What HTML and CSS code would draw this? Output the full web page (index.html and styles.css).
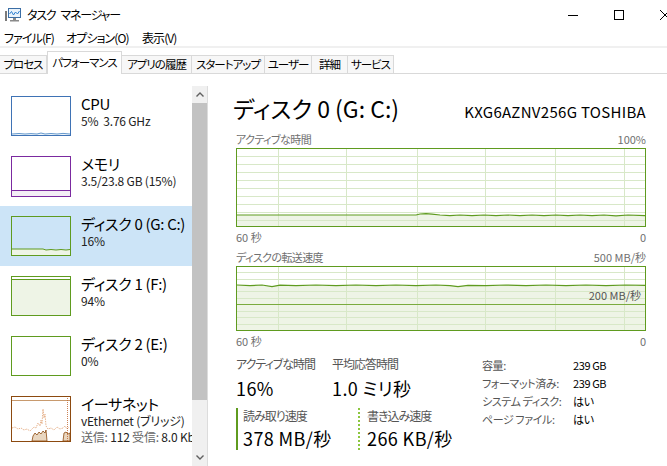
FILE: index.html
```html
<!DOCTYPE html>
<html lang="ja">
<head>
    <meta charset="UTF-8">
    <title>タスク マネージャー</title>
    <link rel="stylesheet" href="styles.css">
</head>
<body>
    <!-- barre de titre -->
    <div class="titlebar">
        <svg class="app-icon" viewBox="0 0 16 16" width="16" height="16">
            <rect x="0" y="4" width="2" height="10" fill="#7a7a7a"/>
            <rect x="3.5" y="1.5" width="12" height="9" fill="#eaf3fb" stroke="#3b6ea5"/>
            <polyline points="4.5,7 6.5,4.5 8.5,8 10.5,5 12.5,7 14.5,4" fill="none" stroke="#2d7fd0" stroke-width="1"/>
            <rect x="8" y="11" width="3" height="2" fill="#8a8a8a"/>
            <rect x="5" y="13" width="9" height="1.5" fill="#8a8a8a"/>
        </svg>
        <span class="title">タスク<span class="gap"></span>マネージャー</span>
        <div class="controls">
            <div class="ctl">
                <svg viewBox="0 0 10 10" width="10" height="10"><line x1="0" y1="5.5" x2="10" y2="5.5" stroke="#000"/></svg>
            </div>
            <div class="ctl">
                <svg viewBox="0 0 10 10" width="10" height="10"><rect x="0.5" y="0.5" width="9" height="9" fill="none" stroke="#000"/></svg>
            </div>
            <div class="ctl">
                <svg viewBox="0 0 10 10" width="10" height="10"><path d="M0 0 L10 10 M10 0 L0 10" stroke="#000" stroke-width="1"/></svg>
            </div>
        </div>
    </div>

    <div class="menubar">
        <span class="menu m1">ファイル(F)</span>
        <span class="menu m2">オプション(O)</span>
        <span class="menu">表示(V)</span>
    </div>

    <div class="tabs">
        <div class="tab t1">プロセス</div>
        <div class="tab t2 active">パフォーマンス</div>
        <div class="tab t3">アプリの履歴</div>
        <div class="tab t4">スタートアップ</div>
        <div class="tab t5">ユーザー</div>
        <div class="tab t6">詳細</div>
        <div class="tab t7">サービス</div>
    </div>

    <div class="main">
        <!-- liste des ressources -->
        <div class="sidebar">
            <div class="list">
                <div class="item">
                    <svg class="thumb" viewBox="0 0 60 40" width="60" height="40">
                        <path d="M1 38 L8 37.5 L14 38 L20 37.6 L26 38 L30 37 L34 38 L40 37.5 L46 38 L52 37.4 L59 38 L59 39 L1 39Z" fill="#eef5fb"/>
                        <polyline points="1,38 8,37.5 14,38 20,37.6 26,38 30,37 34,38 40,37.5 46,38 52,37.4 59,38" fill="none" stroke="#3f7fbf" stroke-width="0.8"/>
                        <rect x="0.5" y="0.5" width="59" height="39" fill="none" stroke="#3f73b5"/>
                    </svg>
                    <div class="info">
                        <div class="name">CPU</div>
                        <div class="sub">5%&nbsp; 3.76 GHz</div>
                    </div>
                </div>
                <div class="item">
                    <svg class="thumb" viewBox="0 0 60 41" width="60" height="41">
                        <rect x="1" y="34" width="58" height="6" fill="#f3eef5"/>
                        <line x1="1" y1="34.5" x2="59" y2="34.5" stroke="#7b2aa0"/>
                        <rect x="0.5" y="0.5" width="59" height="40" fill="none" stroke="#7b2aa0"/>
                    </svg>
                    <div class="info">
                        <div class="name">メモリ</div>
                        <div class="sub">3.5/23.8 GB (15%)</div>
                    </div>
                </div>
                <div class="item selected">
                    <svg class="thumb" viewBox="0 0 60 40" width="60" height="40">
                        <path d="M1 33 L32 33 L35 34 L40 33.5 L45 34 L50 33.5 L55 34 L59 33.5 L59 39 L1 39Z" fill="#eef4e6"/>
                        <polyline points="1,33 32,33 35,34 40,33.5 45,34 50,33.5 55,34 59,33.5" fill="none" stroke="#5f9b1f"/>
                        <rect x="0.5" y="0.5" width="59" height="39" fill="none" stroke="#5f9b1f"/>
                    </svg>
                    <div class="info">
                        <div class="name">ディスク 0 (G: C:)</div>
                        <div class="sub">16%</div>
                    </div>
                </div>
                <div class="item">
                    <svg class="thumb" viewBox="0 0 60 40" width="60" height="40">
                        <rect x="1" y="3" width="58" height="36" fill="#eef4e6"/>
                        <line x1="1" y1="3.5" x2="59" y2="3.5" stroke="#5f9b1f"/>
                        <rect x="0.5" y="0.5" width="59" height="39" fill="none" stroke="#5f9b1f"/>
                    </svg>
                    <div class="info">
                        <div class="name">ディスク 1 (F:)</div>
                        <div class="sub">94%</div>
                    </div>
                </div>
                <div class="item">
                    <svg class="thumb" viewBox="0 0 60 40" width="60" height="40">
                        <rect x="0.5" y="0.5" width="59" height="39" fill="none" stroke="#5f9b1f"/>
                    </svg>
                    <div class="info">
                        <div class="name">ディスク 2 (E:)</div>
                        <div class="sub">0%</div>
                    </div>
                </div>
                <div class="item tall">
                    <svg class="thumb" viewBox="0 0 60 46" width="60" height="46">
                        <line x1="1" y1="4.5" x2="59" y2="4.5" stroke="#c89a6e"/>
                        <path d="M21 45 L22 40 L24 37 L26 39 L28 36 L30 38 L32 35 L34 37 L35 34 L36 45Z M52 45 L53 37 L55 36 L57 38 L59 37 L59 45Z" fill="#e9d6bf" stroke="#8c4a10" stroke-width="0.8"/>
                        <polyline points="1,32 4,31 7,33 10,32 13,34 16,33 19,35 21,33 23,31 25,32 27,27 29,30 30,24 31,28 32,13 33,22 34,18 35,30 37,33 40,32 43,34 46,31 49,33 52,32 54,30 56,33 58,31" fill="none" stroke="#e0a070" stroke-width="0.8" stroke-dasharray="1.5 1"/>
                        <line x1="56.5" y1="2" x2="56.5" y2="45" stroke="#c0622a" stroke-width="0.8" stroke-dasharray="1 1"/>
                        <rect x="0.5" y="0.5" width="59" height="45" fill="none" stroke="#8c4a10"/>
                    </svg>
                    <div class="info">
                        <div class="name">イーサネット</div>
                        <div class="sub">vEthernet (ブリッジ)</div>
                        <div class="sub"><span class="dim">送信:</span> 112 <span class="dim">受信:</span> 8.0 Kbps</div>
                    </div>
                </div>
            </div>
            <div class="scrollbar">
                <div class="arrow">
                    <svg viewBox="0 0 8 5" width="8" height="5"><polyline points="0.5,4.5 4,1 7.5,4.5" fill="none" stroke="#606060" stroke-width="1.4"/></svg>
                </div>
                <div class="scroll-thumb"></div>
                <div class="scroll-gap"></div>
                <div class="arrow">
                    <svg viewBox="0 0 8 5" width="8" height="5"><polyline points="0.5,0.5 4,4 7.5,0.5" fill="none" stroke="#606060" stroke-width="1.4"/></svg>
                </div>
            </div>
        </div>

        <!-- détail du disque -->
        <div class="detail">
            <div class="header">
                <div class="big-title">ディスク 0 (G: C:)</div>
                <div class="model">KXG6AZNV256G TOSHIBA</div>
            </div>

            <div class="axis-row top">
                <span class="jp">アクティブな時間</span>
                <span>100%</span>
            </div>
            <svg class="graph" viewBox="0 0 410 79" width="410" height="79">
                <path d="M1 67 L180 67 L184 66 L190 65.6 L196 66.2 L204 67 L214 67.6 L224 67 L236 67.6 L248 67 L260 67.6 L272 67 L284 67.6 L296 67 L308 67.6 L320 67 L332 67.6 L344 67 L356 67.6 L368 67 L380 67.8 L392 67 L409 67.6 L409 78 L1 78Z" fill="#eef4e6"/>
                <g stroke="#d8e8c8" stroke-width="1">
                    <line x1="1" y1="8.5" x2="409" y2="8.5"/>
                    <line x1="1" y1="16.5" x2="409" y2="16.5"/>
                    <line x1="1" y1="24.5" x2="409" y2="24.5"/>
                    <line x1="1" y1="32.5" x2="409" y2="32.5"/>
                    <line x1="1" y1="40.5" x2="409" y2="40.5"/>
                    <line x1="1" y1="48.5" x2="409" y2="48.5"/>
                    <line x1="1" y1="56.5" x2="409" y2="56.5"/>
                    <line x1="1" y1="64.5" x2="409" y2="64.5"/>
                    <line x1="1" y1="72.5" x2="409" y2="72.5"/>
                    <line x1="42.5" y1="1" x2="42.5" y2="78"/>
                    <line x1="110.5" y1="1" x2="110.5" y2="78"/>
                    <line x1="181.5" y1="1" x2="181.5" y2="78"/>
                    <line x1="249.5" y1="1" x2="249.5" y2="78"/>
                    <line x1="319.5" y1="1" x2="319.5" y2="78"/>
                    <line x1="388.5" y1="1" x2="388.5" y2="78"/>
                </g>
                <polyline points="1,67 180,67 184,66 190,65.6 196,66.2 204,67 214,67.6 224,67 236,67.6 248,67 260,67.6 272,67 284,67.6 296,67 308,67.6 320,67 332,67.6 344,67 356,67.6 368,67 380,67.8 392,67 409,67.6" fill="none" stroke="#5f9b1f" stroke-width="1.2"/>
                <rect x="0.5" y="0.5" width="409" height="78" fill="none" stroke="#5f9b1f"/>
            </svg>
            <div class="axis-row">
                <span>60 秒</span>
                <span>0</span>
            </div>

            <div class="axis-row top second">
                <span class="jp">ディスクの転送速度</span>
                <span>500 MB/秒</span>
            </div>
            <div class="graph-wrap">
                <svg class="graph" viewBox="0 0 410 65" width="410" height="65">
                    <path d="M1 19 L14 19.6 L26 19 L36 20.6 L44 19.2 L60 19.6 L80 19 L100 19.6 L120 19 L140 19.6 L160 19 L180 19.6 L200 19 L214 19.6 L222 20.6 L232 19.4 L250 19.6 L270 19 L290 19.6 L310 19 L330 19.6 L350 19 L370 19.6 L390 19 L409 19.4 L409 64 L1 64Z" fill="#eef4e6"/>
                    <g stroke="#d8e8c8" stroke-width="1">
                        <line x1="1" y1="6.5" x2="409" y2="6.5"/>
                        <line x1="1" y1="13.5" x2="409" y2="13.5"/>
                        <line x1="1" y1="25.5" x2="409" y2="25.5"/>
                        <line x1="1" y1="32.5" x2="409" y2="32.5"/>
                        <line x1="1" y1="45.5" x2="409" y2="45.5"/>
                        <line x1="1" y1="51.5" x2="409" y2="51.5"/>
                        <line x1="1" y1="58.5" x2="409" y2="58.5"/>
                        <line x1="42.5" y1="1" x2="42.5" y2="64"/>
                        <line x1="110.5" y1="1" x2="110.5" y2="64"/>
                        <line x1="181.5" y1="1" x2="181.5" y2="64"/>
                        <line x1="249.5" y1="1" x2="249.5" y2="64"/>
                        <line x1="319.5" y1="1" x2="319.5" y2="64"/>
                        <line x1="388.5" y1="1" x2="388.5" y2="64"/>
                    </g>
                    <line x1="1" y1="38.5" x2="409" y2="38.5" stroke="#7aab3e" stroke-width="1"/>
                    <polyline points="1,19 14,19.6 26,19 36,20.6 44,19.2 60,19.6 80,19 100,19.6 120,19 140,19.6 160,19 180,19.6 200,19 214,19.6 222,20.6 232,19.4 250,19.6 270,19 290,19.6 310,19 330,19.6 350,19 370,19.6 390,19 409,19.4" fill="none" stroke="#5f9b1f" stroke-width="1.2"/>
                    <rect x="0.5" y="0.5" width="409" height="64" fill="none" stroke="#5f9b1f"/>
                </svg>
                <span class="scale-label">200 MB/秒</span>
            </div>
            <div class="axis-row">
                <span>60 秒</span>
                <span>0</span>
            </div>

            <div class="stats">
                <div class="stats-left">
                    <div class="stat-row">
                        <div class="stat col1">
                            <div class="stat-label">アクティブな時間</div>
                            <div class="stat-value">16%</div>
                        </div>
                        <div class="stat">
                            <div class="stat-label">平均応答時間</div>
                            <div class="stat-value">1.0 ミリ秒</div>
                        </div>
                    </div>
                    <div class="stat-row rates">
                        <div class="stat rate read">
                            <div class="stat-label">読み取り速度</div>
                            <div class="stat-value">378 MB/秒</div>
                        </div>
                        <div class="stat rate write">
                            <div class="stat-label">書き込み速度</div>
                            <div class="stat-value">266 KB/秒</div>
                        </div>
                    </div>
                </div>
                <div class="props">
                    <div class="prop"><span class="prop-key">容量:</span><span class="prop-val">239 GB</span></div>
                    <div class="prop"><span class="prop-key">フォーマット済み:</span><span class="prop-val">239 GB</span></div>
                    <div class="prop"><span class="prop-key">システム ディスク:</span><span class="prop-val">はい</span></div>
                    <div class="prop"><span class="prop-key">ページ ファイル:</span><span class="prop-val">はい</span></div>
                </div>
            </div>
        </div>
    </div>
</body>
</html>
```

FILE: styles.css
```css
* {
    box-sizing: border-box;
}

body {
    margin: 0;
    width: 667px;
    height: 466px;
    overflow: hidden;
    background-color: #fff;
    color: #000;
    font-family: "Noto Sans CJK JP", sans-serif;
    font-feature-settings: "palt";
    font-size: 12px;
}

/* barre de titre */
.titlebar {
    height: 30px;
    display: flex;
    align-items: center;
    padding-left: 5px;
}

.app-icon {
    margin-right: 6px;
}

.title {
    font-size: 12px;
    line-height: 16px;
    letter-spacing: -1.2px;
}

.title .gap {
    display: inline-block;
    width: 5px;
}

.controls {
    margin-left: auto;
    margin-right: -21px;
    display: flex;
    height: 100%;
}

.ctl {
    width: 46px;
    display: flex;
    align-items: center;
    justify-content: center;
}

/* menu */
.menubar {
    height: 18px;
    display: flex;
    align-items: center;
    padding-left: 4px;
    border-bottom: 2px solid #f0f0f0;
}

.menu {
    font-size: 12px;
    line-height: 16px;
    letter-spacing: -0.9px;
    white-space: nowrap;
}

.m1 {
    width: 62px;
}

.m2 {
    width: 76px;
}

/* onglets */
.tabs {
    height: 26px;
    display: flex;
    align-items: flex-end;
    border-bottom: 1px solid #d9d9d9;
}

.tab {
    height: 18px;
    font-size: 11.5px;
    line-height: 16px;
    letter-spacing: -1px;
    white-space: nowrap;
    text-align: center;
    background-color: #f7f7f7;
    border: 1px solid #d9d9d9;
    border-bottom: none;
    border-left: none;
}

.tab.active {
    height: 23px;
    margin-bottom: -1px;
    background-color: #fff;
    border-left: 1px solid #d9d9d9;
    padding-top: 2px;
}

.t1 { width: 47px; }
.t2 { width: 75px; }
.t3 { width: 70px; }
.t4 { width: 73px; }
.t5 { width: 47px; }
.t6 { width: 36px; }
.t7 { width: 46px; }

/* zone principale */
.main {
    display: flex;
    height: 392px;
}

.sidebar {
    width: 208px;
    padding-top: 12px;
    display: flex;
}

.list {
    width: 192px;
    overflow: hidden;
}

.item {
    height: 60px;
    display: flex;
    padding: 10px 0 0 11px;
}

.item.tall {
    height: 80px;
}

.item.selected {
    background-color: #cce4f7;
}

.thumb {
    flex: none;
}

.info {
    margin-left: 10px;
    margin-top: -2px;
    white-space: nowrap;
}

.name {
    font-size: 15px;
    line-height: 19px;
    letter-spacing: -0.3px;
}

.sub {
    font-size: 12px;
    line-height: 16px;
    color: #222;
    letter-spacing: -0.2px;
}

.dim {
    color: #666;
}

.scrollbar {
    width: 16px;
    height: 380px;
    display: flex;
    flex-direction: column;
    background-color: #f0f0f0;
    border-right: 1px solid #dcdcdc;
}

.arrow {
    height: 17px;
    display: flex;
    align-items: center;
    justify-content: center;
}

.scroll-thumb {
    height: 297px;
    background-color: #c2c2c2;
}

.scroll-gap {
    flex: 1;
}

/* détail */
.detail {
    flex: 1;
    padding: 18px 21px 0 28px;
}

.header {
    display: flex;
    justify-content: space-between;
    align-items: baseline;
}

.big-title {
    font-size: 23px;
    line-height: 32px;
    margin-left: -3px;
}

.model {
    font-size: 15px;
    line-height: 20px;
    letter-spacing: 0.3px;
}

.axis-row {
    display: flex;
    justify-content: space-between;
    font-size: 11px;
    line-height: 14px;
    color: #707070;
    margin-top: 3px;
}

.axis-row .jp {
    letter-spacing: -0.6px;
}

.axis-row.top {
    margin-top: 8px;
    margin-bottom: 2px;
}

.axis-row.second {
    margin-top: 6px;
}

.graph {
    display: block;
}

.graph-wrap {
    position: relative;
}

.scale-label {
    position: absolute;
    right: 5px;
    top: 22px;
    font-size: 11px;
    line-height: 14px;
    color: #555;
}

.stats {
    display: flex;
    margin-top: 8px;
}

.stats-left {
    width: 246px;
}

.stat-row {
    display: flex;
}

.stat.col1 {
    width: 96px;
}

.stat-label {
    font-size: 12px;
    line-height: 16px;
    color: #555;
    letter-spacing: -1px;
}

.stat-value {
    font-size: 18px;
    line-height: 24px;
    margin-top: 4px;
    letter-spacing: 0.4px;
}

.rates {
    margin-top: 8px;
}

.rate {
    padding-left: 5px;
}

.rate .stat-value {
    margin-top: 2px;
}

.rate.read {
    width: 122px;
    border-left: 2px solid #5f9b1f;
}

.rate.write {
    border-left: 2px dotted #8cc63f;
    padding-left: 7px;
}

.prop {
    display: flex;
    font-size: 11px;
    line-height: 18px;
    letter-spacing: -0.4px;
}

.prop-key {
    width: 91px;
    color: #555;
}
```
